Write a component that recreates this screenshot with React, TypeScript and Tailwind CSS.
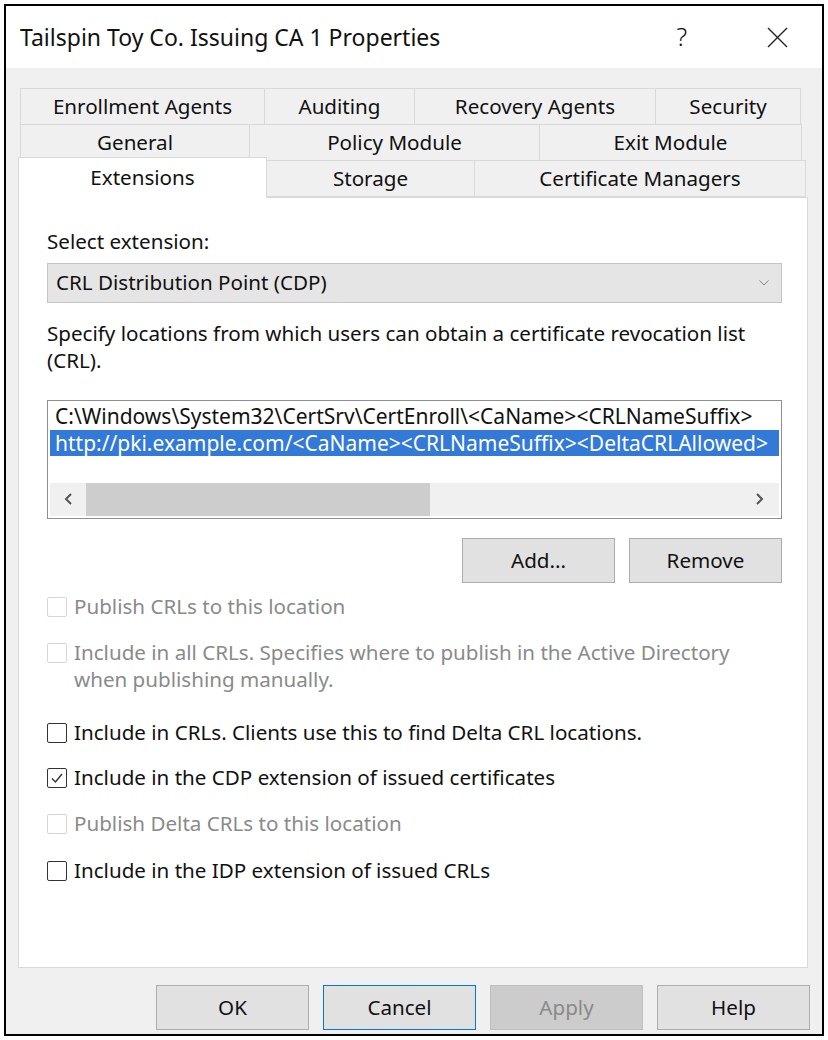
import React from "react";

const font = { fontFamily: '"Noto Sans", "Open Sans", sans-serif' };

const row1 = [
  { label: "Enrollment Agents", w: "w-[245px]" },
  { label: "Auditing", w: "w-[151px]" },
  { label: "Recovery Agents", w: "w-[242px]" },
  { label: "Security", w: "w-[146px]" },
];
const row2 = [
  { label: "General", w: "w-[230px]" },
  { label: "Policy Module", w: "w-[291px]" },
  { label: "Exit Module", w: "w-[263px]" },
];

function Tab({ label, w }: { label: string; w: string }) {
  return (
    <div
      className={`${w} -ml-px flex h-[37px] items-center justify-center border border-[#d9d9d9] bg-[#f0f0f0] text-[20.6px] text-[#111111] first:ml-0`}
    >
      {label}
    </div>
  );
}

function Check({
  label,
  checked,
  disabled,
  extra,
}: {
  label: string;
  checked?: boolean;
  disabled?: boolean;
  extra?: string;
}) {
  return (
    <div className="flex items-start gap-[7px]">
      <div
        className={`mt-[4px] flex h-[20px] w-[20px] shrink-0 items-center justify-center rounded-[2px] border-[1.5px] bg-white ${
          disabled ? "border-[#d6d6d6]" : "border-[#333333]"
        }`}
      >
        {checked && (
          <svg width="14" height="14" viewBox="0 0 14 14" fill="none">
            <path d="M2 7.5 L5.5 11 L12 3" stroke="#333" strokeWidth="1.4" />
          </svg>
        )}
      </div>
      <div
        className={`text-[20.6px] leading-[27px] ${
          disabled ? "text-[#8a8a8a]" : "text-[#111111]"
        }`}
      >
        {label}
        {extra && <div>{extra}</div>}
      </div>
    </div>
  );
}

function Btn({
  label,
  variant,
}: {
  label: string;
  variant?: "focus" | "disabled";
}) {
  const cls =
    variant === "focus"
      ? "border-[#0078d7] bg-[#e1e1e1] text-[#111111]"
      : variant === "disabled"
        ? "border-[#bfbfbf] bg-[#cccccc] text-[#8a8a8a]"
        : "border-[#adadad] bg-[#e1e1e1] text-[#111111]";
  return (
    <div
      className={`flex h-[45px] w-[153px] items-center justify-center border-[1.5px] text-[20.6px] ${cls}`}
    >
      {label}
    </div>
  );
}

export default function App() {
  return (
    <div className="h-[1040px] w-[828px] bg-white p-[4px]" style={font}>
      <div className="flex h-[1032px] w-[820px] flex-col border-2 border-black bg-[#f0f0f0]">
        {/* title bar */}
        <div className="flex h-[62px] items-center bg-white pl-[14px] pr-[34px] text-[23px] text-[#111111]">
          <span className="flex-1">Tailspin Toy Co. Issuing CA 1 Properties</span>
          <span className="mr-[80px] text-[25px] font-light">?</span>
          <svg width="21" height="21" viewBox="0 0 21 21">
            <path d="M1 1 L20 20 M20 1 L1 20" stroke="#222" strokeWidth="1.4" />
          </svg>
        </div>

        <div className="flex flex-1 flex-col px-[12px] pt-[20px]">
          {/* tabs */}
          <div className="ml-[2px] flex">
            {row1.map((t) => (
              <Tab key={t.label} {...t} />
            ))}
          </div>
          <div className="-mt-px ml-[2px] flex">
            {row2.map((t) => (
              <Tab key={t.label} {...t} />
            ))}
          </div>
          <div className="relative z-10 -mt-px flex items-end">
            <div className="-mb-px -mt-[4px] flex h-[41px] w-[249px] items-start justify-center border border-b-0 border-[#d9d9d9] bg-white pt-[4px] text-[20.6px] text-[#111111]">
              Extensions
            </div>
            <Tab label="Storage" w="w-[209px]" />
            <Tab label="Certificate Managers" w="w-[332px]" />
          </div>

          {/* panel */}
          <div className="flex h-[771px] w-[790px] flex-col border border-[#d9d9d9] bg-white pl-[28px] pr-[25px] pt-[28px]">
            <div className="text-[20.6px] text-[#111111]">Select extension:</div>
            <div className="mt-[6px] flex h-[40px] items-center justify-between border border-[#c4c4c4] bg-[#e5e5e5] pl-[8px] pr-[12px] text-[20.6px] text-[#111111]">
              <span>CRL Distribution Point (CDP)</span>
              <svg width="10" height="6" viewBox="0 0 10 6">
                <path d="M0.5 0.5 L5 5 L9.5 0.5" stroke="#888" fill="none" strokeWidth="1" />
              </svg>
            </div>
            <div className="mt-[17px] text-[20.6px] leading-[27px] text-[#111111]">
              Specify locations from which users can obtain a certificate revocation list (CRL).
            </div>

            {/* list box */}
            <div className="mt-[26px] flex h-[119px] flex-col border-[1.5px] border-[#8f8f8f] bg-white p-[2px]">
              <div className="flex-1 overflow-hidden">
                <div className="h-[27px] whitespace-nowrap pl-[5px] text-[21px] leading-[27px] text-[#111111]">
                  C:\Windows\System32\CertSrv\CertEnroll\&lt;CaName&gt;&lt;CRLNameSuffix&gt;
                </div>
                <div className="h-[26px] w-[729px] whitespace-nowrap bg-[#3379d8] pl-[5px] text-[21px] leading-[26px] text-white">
                  http://pki.example.com/&lt;CaName&gt;&lt;CRLNameSuffix&gt;&lt;DeltaCRLAllowed&gt;
                </div>
              </div>
              <div className="flex h-[33px] items-center bg-[#f0f0f0]">
                <div className="flex w-[36px] items-center justify-center">
                  <svg width="9" height="12" viewBox="0 0 9 12">
                    <path d="M7 1 L2 6 L7 11" stroke="#555" strokeWidth="2" fill="none" />
                  </svg>
                </div>
                <div className="h-full w-[344px] bg-[#cdcdcd]" />
                <div className="flex-1" />
                <div className="flex w-[40px] items-center justify-center">
                  <svg width="9" height="12" viewBox="0 0 9 12">
                    <path d="M2 1 L7 6 L2 11" stroke="#555" strokeWidth="2" fill="none" />
                  </svg>
                </div>
              </div>
            </div>

            <div className="mt-[19px] flex justify-end gap-[14px]">
              <Btn label="Add..." />
              <Btn label="Remove" />
            </div>

            <div className="mt-[10px] flex flex-col">
              <Check label="Publish CRLs to this location" disabled />
              <div className="mt-[19px]">
                <Check
                  label="Include in all CRLs. Specifies where to publish in the Active Directory"
                  extra="when publishing manually."
                  disabled
                />
              </div>
              <div className="mt-[26px]">
                <Check label="Include in CRLs. Clients use this to find Delta CRL locations." />
              </div>
              <div className="mt-[18px]">
                <Check label="Include in the CDP extension of issued certificates" checked />
              </div>
              <div className="mt-[19px]">
                <Check label="Publish Delta CRLs to this location" disabled />
              </div>
              <div className="mt-[20px]">
                <Check label="Include in the IDP extension of issued CRLs" />
              </div>
            </div>
          </div>

          {/* footer buttons */}
          <div className="mt-[17px] flex justify-end gap-[14px]">
            <Btn label="OK" />
            <Btn label="Cancel" variant="focus" />
            <Btn label="Apply" variant="disabled" />
            <Btn label="Help" />
          </div>
        </div>
      </div>
    </div>
  );
}
